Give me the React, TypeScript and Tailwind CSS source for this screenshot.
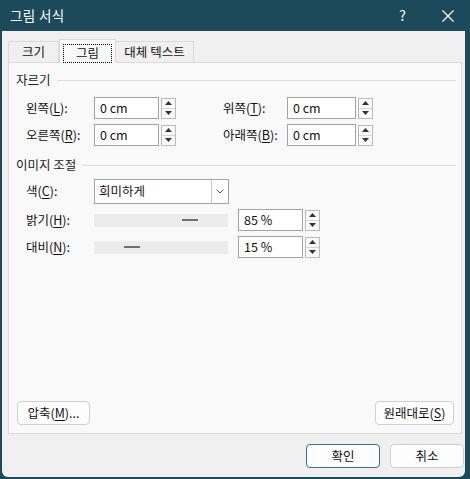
import React from 'react';

const font = { fontFamily: '"Noto Sans CJK KR", "Noto Sans", sans-serif' };

const U: React.FC<{ c: string }> = ({ c }) => <span className="underline underline-offset-2">{c}</span>;

const Spinner: React.FC<{ h: string }> = ({ h }) => (
    <div className={`w-[15px] ${h} border border-[#b9b9b9] bg-[#fbfbfb] flex flex-col`}>
        <div className="flex-1 flex items-center justify-center border-b border-[#d6d6d6]">
            <svg width="7" height="4" viewBox="0 0 7 4"><path d="M0 4 L3.5 0 L7 4 Z" fill="#333" /></svg>
        </div>
        <div className="flex-1 flex items-center justify-center">
            <svg width="7" height="4" viewBox="0 0 7 4"><path d="M0 0 L3.5 4 L7 0 Z" fill="#333" /></svg>
        </div>
    </div>
);

const SpinBox: React.FC<{ value: string; w: string }> = ({ value, w }) => (
    <div className="flex items-center gap-[2px]">
        <div className={`${w} h-[22px] border border-[#a3a3a3] bg-white flex items-center pl-[5px] text-[12.5px] text-[#111]`}>{value}</div>
        <Spinner h="h-[21px]" />
    </div>
);

const GroupTitle: React.FC<{ title: string }> = ({ title }) => (
    <div className="flex items-center h-[18px]">
        <span className="text-[12.5px] text-[#222]">{title}</span>
        <div className="flex-1 h-px bg-[#dcdcdc] ml-[6px] mr-[5px]" />
    </div>
);

const Track: React.FC<{ pos: string }> = ({ pos }) => (
    <div className={`w-[134px] h-[13px] bg-[#ececec] flex items-center ${pos}`}>
        <div className="w-[16px] h-[2px] bg-[#6f6f6f]" />
    </div>
);

const Btn: React.FC<{ children: React.ReactNode; w: string; primary?: boolean }> = ({ children, w, primary }) => (
    <button className={`${w} h-[24px] rounded-[4px] bg-[#fdfdfd] text-[12.5px] text-[#111] flex items-center justify-center border ${primary ? 'border-[#2f6f9a]' : 'border-[#d0d0d0]'}`}>
        {children}
    </button>
);

export default function App() {
    return (
        <div className="w-[470px] h-[479px] bg-[#1c4a5b] flex flex-col" style={font}>
            {/* Title bar */}
            <div className="h-[31px] flex items-center pl-[10px] pr-[16px] text-white">
                <span className="text-[13.5px] tracking-wide">그림 서식</span>
                <span className="ml-auto mr-[36px] text-[14px]">?</span>
                <svg width="12" height="12" viewBox="0 0 12 12"><path d="M0.5 0.5 L11.5 11.5 M11.5 0.5 L0.5 11.5" stroke="#fff" strokeWidth="1.2" /></svg>
            </div>

            {/* Body */}
            <div className="flex-1 ml-[2px] mr-[5px] mb-[2px] bg-[#f0f0f0] rounded-b-[6px] flex flex-col pt-[7px]">
                {/* Tabs */}
                <div className="flex items-end h-[24px] pl-[6px] text-[12.5px] text-[#111]">
                    <div className="w-[51px] h-[21px] flex items-center justify-center border border-b-0 border-[#dadada] bg-[#f0f0f0]">크기</div>
                    <div className="w-[57px] h-[24px] flex items-center justify-center border border-b-0 border-[#dadada] bg-[#f9f9f9] relative z-10 -mb-px">
                        <span className="border border-dotted border-black px-[12px] h-[19px] mt-[4px] flex items-center">그림</span>
                    </div>
                    <div className="w-[78px] h-[21px] flex items-center justify-center border border-b-0 border-l-0 border-[#dadada] bg-[#f0f0f0]">대체 텍스트</div>
                </div>

                {/* Panel */}
                <div className="ml-[6px] mr-[3px] h-[372px] border border-[#dadada] bg-[#f9f9f9] flex flex-col pl-[7px] pt-[8px] pb-[8px] text-[12.5px] text-[#111]">
                    <GroupTitle title="자르기" />
                    <div className="flex flex-col gap-[5px] mt-[8px] pl-[10px]">
                        <div className="flex items-center">
                            <span className="w-[68px]">왼쪽(<U c="L" />):</span>
                            <SpinBox value="0 cm" w="w-[65px]" />
                            <span className="w-[64px] ml-[47px]">위쪽(<U c="T" />):</span>
                            <SpinBox value="0 cm" w="w-[69px]" />
                        </div>
                        <div className="flex items-center">
                            <span className="w-[68px]">오른쪽(<U c="R" />):</span>
                            <SpinBox value="0 cm" w="w-[65px]" />
                            <span className="w-[64px] ml-[47px]">아래쪽(<U c="B" />):</span>
                            <SpinBox value="0 cm" w="w-[69px]" />
                        </div>
                    </div>

                    <div className="mt-[10px]">
                        <GroupTitle title="이미지 조절" />
                    </div>
                    <div className="flex flex-col pl-[10px] mt-[5px]">
                        <div className="flex items-center">
                            <span className="w-[68px]">색(<U c="C" />):</span>
                            <div className="w-[135px] h-[25px] border border-[#a3a3a3] bg-white flex items-center">
                                <span className="flex-1 pl-[4px] text-[12.5px]">희미하게</span>
                                <div className="w-[17px] h-full border-l border-[#c8c8c8] flex items-center justify-center">
                                    <svg width="8" height="5" viewBox="0 0 8 5"><path d="M0.5 0.5 L4 4 L7.5 0.5" stroke="#555" fill="none" /></svg>
                                </div>
                            </div>
                        </div>
                        <div className="flex items-center mt-[5px]">
                            <span className="w-[68px]">밝기(<U c="H" />):</span>
                            <Track pos="pl-[88px]" />
                            <div className="ml-[10px]"><SpinBox value="85 %" w="w-[65px]" /></div>
                        </div>
                        <div className="flex items-center mt-[5px]">
                            <span className="w-[68px]">대비(<U c="N" />):</span>
                            <Track pos="pl-[30px]" />
                            <div className="ml-[10px]"><SpinBox value="15 %" w="w-[65px]" /></div>
                        </div>
                    </div>

                    <div className="flex-1" />
                    <div className="flex items-center pl-[1px] pr-[7px]">
                        <Btn w="w-[73px]">압축(<U c="M" />)...</Btn>
                        <div className="flex-1" />
                        <Btn w="w-[79px]">원래대로(<U c="S" />)</Btn>
                    </div>
                </div>

                {/* Footer */}
                <div className="flex justify-end gap-[10px] mt-[10px] pr-[1px]">
                    <Btn w="w-[74px]" primary>확인</Btn>
                    <Btn w="w-[74px]">취소</Btn>
                </div>
            </div>
        </div>
    );
}
